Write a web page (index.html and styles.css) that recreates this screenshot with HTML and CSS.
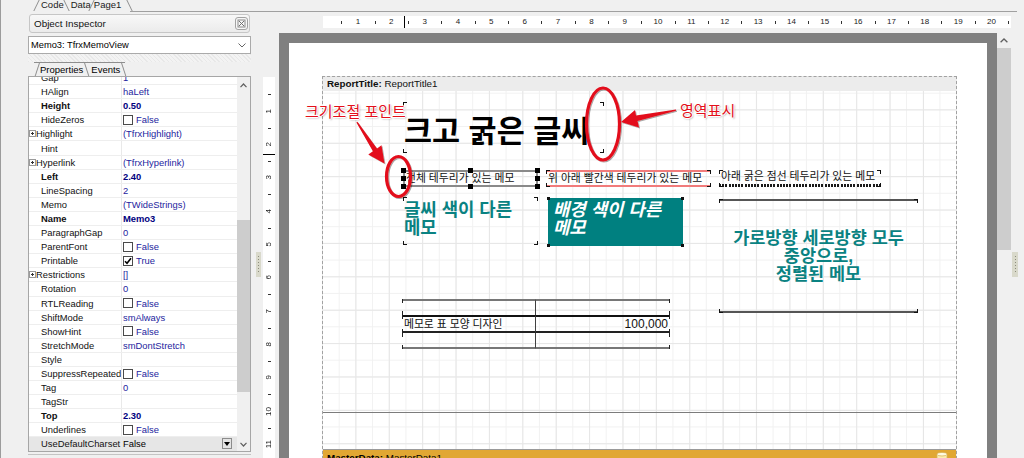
FILE: index.html
```html
<!DOCTYPE html>
<html lang="ko">
<head>
<meta charset="utf-8">
<title>Report Designer</title>
<link rel="stylesheet" href="styles.css">
</head>
<body>
<div class="app">
  <div class="tabstrip">
    <span class="tab t-code">Code</span><span class="tab t-data">Data</span><span class="tab t-page">Page1</span><span class="tabline"></span>
  </div>
  <div class="main">
    <aside class="inspector">
      <div class="oi-head">
        <span class="oi-title">Object Inspector</span>
        <span class="oi-close"><svg width="13" height="13" viewBox="0 0 13 13"><rect x="0.5" y="0.5" width="12" height="12" rx="2.5" fill="#f6f6f6" stroke="#a2a2a2"/><rect x="3" y="3" width="7" height="7" fill="none" stroke="#8a8a8a"/><path d="M4 4l5 5M9 4l-5 5" stroke="#707070"/></svg></span>
      </div>
      <div class="combo"><span>Memo3: TfrxMemoView</span><svg width="8" height="5" viewBox="0 0 8 5"><path d="M0.5 0.5l3.5 3.5 3.5-3.5" fill="none" stroke="#666"/></svg></div>
      <div class="hatch"></div>
      <div class="ptabs"><span class="ptab p-prop">Properties</span><span class="ptab p-ev">Events</span></div>
      <div class="pgrid">
        <div class="rows">
          <div class="rows-in">
            <div class="row"><span class="pn">Gap</span><span class="pv">1</span></div>
            <div class="row"><span class="pn">HAlign</span><span class="pv">haLeft</span></div>
            <div class="row b"><span class="pn">Height</span><span class="pv">0.50</span></div>
            <div class="row"><span class="pn">HideZeros</span><span class="pv"><i class="cb"></i>False</span></div>
            <div class="row x"><span class="pn"><i class="exp"></i>Highlight</span><span class="pv">(TfrxHighlight)</span></div>
            <div class="row"><span class="pn">Hint</span><span class="pv"></span></div>
            <div class="row x"><span class="pn"><i class="exp"></i>Hyperlink</span><span class="pv">(TfrxHyperlink)</span></div>
            <div class="row b"><span class="pn">Left</span><span class="pv">2.40</span></div>
            <div class="row"><span class="pn">LineSpacing</span><span class="pv">2</span></div>
            <div class="row"><span class="pn">Memo</span><span class="pv">(TWideStrings)</span></div>
            <div class="row b"><span class="pn">Name</span><span class="pv">Memo3</span></div>
            <div class="row"><span class="pn">ParagraphGap</span><span class="pv">0</span></div>
            <div class="row"><span class="pn">ParentFont</span><span class="pv"><i class="cb"></i>False</span></div>
            <div class="row"><span class="pn">Printable</span><span class="pv"><i class="cb"><svg width="8" height="8" viewBox="0 0 8 8"><path d="M1 4.2l2 2 4-5" fill="none" stroke="#000" stroke-width="1.6"/></svg></i>True</span></div>
            <div class="row x"><span class="pn"><i class="exp"></i>Restrictions</span><span class="pv">[]</span></div>
            <div class="row"><span class="pn">Rotation</span><span class="pv">0</span></div>
            <div class="row"><span class="pn">RTLReading</span><span class="pv"><i class="cb"></i>False</span></div>
            <div class="row"><span class="pn">ShiftMode</span><span class="pv">smAlways</span></div>
            <div class="row"><span class="pn">ShowHint</span><span class="pv"><i class="cb"></i>False</span></div>
            <div class="row"><span class="pn">StretchMode</span><span class="pv">smDontStretch</span></div>
            <div class="row"><span class="pn">Style</span><span class="pv"></span></div>
            <div class="row"><span class="pn">SuppressRepeated</span><span class="pv"><i class="cb"></i>False</span></div>
            <div class="row"><span class="pn">Tag</span><span class="pv">0</span></div>
            <div class="row"><span class="pn">TagStr</span><span class="pv"></span></div>
            <div class="row b"><span class="pn">Top</span><span class="pv">2.30</span></div>
            <div class="row"><span class="pn">Underlines</span><span class="pv"><i class="cb"></i>False</span></div>
            <div class="row sel"><span class="pn">UseDefaultCharset</span><span class="pv">False<i class="dd"><svg width="6" height="4" viewBox="0 0 6 4"><path d="M0 0h6L3 4z" fill="#000"/></svg></i></span></div>
          </div>
        </div>
        <div class="vs">
          <div class="arr up"><svg width="7" height="5" viewBox="0 0 7 5"><path d="M0.5 4.2L3.5 1l3 3.2" fill="none" stroke="#606060" stroke-width="1.2"/></svg></div>
          <div class="thumb"></div>
          <div class="arr dn"><svg width="7" height="5" viewBox="0 0 7 5"><path d="M0.5 0.8L3.5 4l3-3.2" fill="none" stroke="#606060" stroke-width="1.2"/></svg></div>
        </div>
      </div>
      <div class="oi-foot"></div>
    </aside>
    <div class="split"><span class="grip"></span></div>
    <section class="designer">
      <div class="hr-wrap">
        <div class="hruler">
          <span class="hsp"></span>
          <span class="hc">1</span><span class="hc">2</span><span class="hc">3</span><span class="hc">4</span><span class="hc">5</span><span class="hc">6</span><span class="hc">7</span><span class="hc">8</span><span class="hc">9</span><span class="hc">10</span><span class="hc">11</span><span class="hc">12</span><span class="hc">13</span><span class="hc">14</span><span class="hc">15</span><span class="hc">16</span><span class="hc">17</span><span class="hc">18</span><span class="hc">19</span><span class="hc">20</span><span class="hc"></span>
          <i class="hcur"></i>
        </div>
      </div>
      <div class="vr-wrap">
        <div class="vruler">
          <span class="vsp"></span>
          <span class="vc"><b>1</b></span><span class="vc"><b>2</b></span><span class="vc"><b>3</b></span><span class="vc"><b>4</b></span><span class="vc"><b>5</b></span><span class="vc"><b>6</b></span><span class="vc"><b>7</b></span><span class="vc"><b>8</b></span><span class="vc"><b>9</b></span><span class="vc"><b>10</b></span><span class="vc"><b>11</b></span><span class="vc"><b>12</b></span>
          <i class="vcur"></i>
        </div>
      </div>
      <div class="canvas">
        <div class="page">
          <div class="margin">
            <div class="bandhead"><b>ReportTitle:</b> ReportTitle1</div>
            <div class="band">
              <div class="memo mk m-title">크고 굵은 글씨</div>
              <div class="memo m-full">전체 테두리가 있는 메모<i class="h tl"></i><i class="h tm"></i><i class="h tr"></i><i class="h ml"></i><i class="h mr"></i><i class="h bl"></i><i class="h bm"></i><i class="h br"></i></div>
              <div class="memo mk m-red">위 아래 빨간색 테두리가 있는 메모</div>
              <div class="memo mk m-dot">아래 굵은 점선 테두리가 있는 메모</div>
              <div class="memo mk m-tcol">글씨 색이 다른<br>메모</div>
              <div class="memo sq m-tbg">배경 색이 다른<br>메모</div>
              <div class="memo mk m-ctr"><span>가로방향 세로방향 모두<br>중앙으로,<br>정렬된 메모</span></div>
              <div class="tbl">
                <div class="cell mkl r1 c1"></div><div class="cell mkr r1"></div>
                <div class="cell mkl r2 c1">메모로 표 모양 디자인</div><div class="cell mkr r2 num">100,000</div>
                <div class="cell mkl r3 c1"></div><div class="cell mkr r3"></div>
              </div>
            </div>
            <div class="gap"></div>
            <div class="mdband"><span><b>MasterData:</b> MasterData1</span><svg class="dbi" width="12" height="10" viewBox="0 0 12 10"><path d="M1 2.2v7h10v-7" fill="#fbeeb0" stroke="#d8b45a" stroke-width="0.8"/><ellipse cx="6" cy="2.2" rx="5" ry="1.8" fill="#fffbe2" stroke="#d8b45a" stroke-width="0.8"/></svg></div>
          </div>
        </div>
      </div>
      <div class="dscroll">
        <div class="arr dup"><svg width="8" height="5" viewBox="0 0 8 5"><path d="M0.6 4.3L4 1l3.4 3.3" fill="none" stroke="#606060" stroke-width="1.3"/></svg></div>
        <div class="thumb dthumb"></div>
      </div>
      <div class="rsplit"><span class="grip"></span></div>
    </section>
  </div>

  <svg class="annot" width="1024" height="458" viewBox="0 0 1024 458">
    <defs>
      <filter id="sh" x="-30%" y="-30%" width="160%" height="160%">
        <feDropShadow dx="1" dy="1" stdDeviation="0.7" flood-color="#000" flood-opacity="0.35"/>
      </filter>
    </defs>
    <g filter="url(#sh)">
      <ellipse cx="603" cy="124" rx="16.5" ry="36" fill="none" stroke="#e3101b" stroke-width="3.2"/>
      <ellipse cx="398.5" cy="176.5" rx="12" ry="20" fill="none" stroke="#e3101b" stroke-width="3.2"/>
      <polygon points="621,122 635,110 636,115.5 676,109.4 676,110.8 637.5,121 639,127.5" fill="#e3101b"/>
      <polygon points="384.5,163.5 381.5,145.3 377,148.5 357.4,121.7 356.4,122.4 372.9,151.3 368.3,154.5" fill="#e3101b"/>
    </g>
  </svg>
  <span class="note n1">크기조절 포인트</span>
  <span class="note n2">영역표시</span>
</div>
</body>
</html>
```

FILE: styles.css
```css
* { box-sizing: border-box; }
html, body { margin: 0; padding: 0; background: #f0f0f0; }
body {
  font-family: "Liberation Sans", Arial, sans-serif;
  font-size: 9.4px;
  color: #000;
}
.app {
  position: relative;
  width: 1024px;
  height: 458px;
  overflow: hidden;
  background: #f0f0f0;
  box-shadow: inset 1px 0 0 #9c9c9c;
}

/* ---------- page tabs ---------- */
.tabstrip { display: flex; height: 12px; padding-left: 33px; }
.tab {
  position: relative;
  height: 12px;
  line-height: 10px;
  font-size: 9.5px;
  color: #1a1a1a;
  white-space: nowrap;
}
.tab::before, .tab::after {
  content: "";
  position: absolute;
  top: 0;
  bottom: 1px;
  width: 1px;
  background: #8e8e8e;
}
.tab::before { transform: skewX(-26deg); }
.tab::after { transform: skewX(26deg); }
.t-code { padding: 0 6px 0 8px; }
.t-code::before { left: 2.5px; }
.t-code::after { right: 2.5px; }
.t-data { padding: 0 0 0 1px; }
.t-data::before, .t-data::after { display: none; }
.t-page { padding: 0 9px 0 3px; }
.t-page::before { left: 0; }
.t-page::after { right: 0; }
.tabline { flex: 1; height: 12px; border-bottom: 1px solid #a0a0a0; margin-right: 7px; }

/* ---------- main ---------- */
.main { display: flex; height: 446px; padding-left: 28px; }

/* ---------- object inspector ---------- */
.inspector { width: 223px; flex: none; display: flex; flex-direction: column; }
.oi-head {
  margin: 2px 1px 0 1px;
  height: 19px;
  border: 1px solid #c6c6c6;
  border-radius: 3px;
  background: linear-gradient(#f8f8f8, #ebebeb);
  display: flex;
  align-items: center;
  justify-content: space-between;
  padding: 0 1px 0 4px;
  font-size: 9.9px;
  color: #111;
}
.oi-close { display: flex; }
.combo {
  margin-top: 3px;
  height: 18px;
  border: 1px solid #aaaaaa;
  background: #fff;
  display: flex;
  align-items: center;
  justify-content: space-between;
  padding: 0 4px 0 2px;
  font-size: 9.3px;
}
.hatch {
  height: 8px;
  background: repeating-linear-gradient(45deg, #e8e8e8 0 1px, #f3f3f3 1px 3px);
}
.ptabs { display: flex; height: 14px; padding-left: 6px; }
.ptab {
  position: relative;
  height: 14px;
  line-height: 13px;
  border-top: 1px solid #8e8e8e;
  white-space: nowrap;
  font-size: 9.5px;
}
.ptab::before, .ptab::after {
  content: "";
  position: absolute;
  top: -1px;
  bottom: 0;
  width: 1px;
  background: #8e8e8e;
}
.ptab::before { transform: skewX(-18deg); }
.ptab::after { transform: skewX(18deg); }
.p-prop { padding: 0 4px 0 6px; }
.p-prop::before { left: 3px; }
.p-prop::after { right: 0; }
.p-ev { padding: 0 5px 0 4px; }
.p-ev::before { display: none; }
.p-ev::after { right: 1px; }

.pgrid {
  height: 376px;
  border: 1px solid #a6a6a6;
  background: #fff;
  display: flex;
  overflow: hidden;
}
.rows { width: 208px; flex: none; overflow: hidden; }
.rows-in { margin-top: -6px; }
.row {
  display: flex;
  height: 14.1px;
  border-bottom: 1px solid #eeeeee;
  white-space: nowrap;
}
.pn {
  width: 93px;
  flex: none;
  padding-left: 12px;
  border-right: 1px solid #e9e9e9;
  display: flex;
  align-items: center;
  overflow: hidden;
  color: #111;
}
.x .pn { padding-left: 0; }
.exp {
  width: 7px;
  height: 7px;
  margin-left: 0;
  border: 1px solid #9a9a9a;
  background:
    linear-gradient(#333, #333) center / 3px 1px no-repeat,
    linear-gradient(#333, #333) center / 1px 3px no-repeat,
    #fff;
  flex: none;
}
.pv {
  flex: 1;
  padding-left: 1px;
  display: flex;
  align-items: center;
  color: #24249e;
  overflow: hidden;
}
.b .pn, .b .pv { font-weight: bold; }
.b .pv { color: #00007e; }
.cb {
  width: 10px;
  height: 10px;
  border: 1px solid #4a4a4a;
  background: #fff;
  margin-right: 3px;
  display: flex;
  align-items: center;
  justify-content: center;
  flex: none;
}
.sel { background: #e6e6e6; }
.sel .pv { color: #000; }
.dd {
  margin-left: auto;
  margin-right: 5px;
  width: 10px;
  height: 11px;
  border: 1px solid #8c8c8c;
  background: #e4e4e4;
  display: flex;
  align-items: center;
  justify-content: center;
}
.vs {
  flex: 1;
  background: #f0f0f0;
  display: flex;
  flex-direction: column;
}
.arr { display: flex; align-items: center; justify-content: center; flex: none; }
.vs .up { height: 17px; }
.vs .thumb { margin-top: 126px; height: 172px; background: #cdcdcd; }
.vs .dn { margin-top: auto; height: 14px; }
.oi-foot { margin-top: 2px; border-top: 1px solid #c4c4c4; flex: 1; }

/* ---------- splitters ---------- */
.split { width: 12px; flex: none; }
.grip {
  display: block;
  width: 5px;
  height: 25px;
  margin: 240px 0 0 5px;
  background:
    repeating-linear-gradient(to bottom, #8d8d7c 0 1px, transparent 1px 3px) center / 1px 17px no-repeat,
    #d9d9cb;
}
.rsplit { grid-column: 4; grid-row: 1 / 3; }
.rsplit .grip { margin: 240px 0 0 1px; width: 6px; }

/* ---------- designer ---------- */
.designer {
  flex: 1;
  display: grid;
  grid-template-columns: 16px 718px 14px 1fr;
  grid-template-rows: 21px 1fr;
  min-width: 0;
}
.hr-wrap { grid-column: 2 / 4; grid-row: 1; padding: 4px 0 0 44px; }
.hruler {
  position: relative;
  height: 12px;
  width: 688px;
  background: #fff;
  display: flex;
  overflow: hidden;
  font-size: 8px;
  color: #222;
}
.hsp { flex: 0 0 18.3px; }
.hc {
  flex: 0 0 33.35px;
  display: flex;
  align-items: center;
  justify-content: center;
  line-height: 12px;
  background: linear-gradient(#333, #333) 0 50% / 1px 3px no-repeat;
}
.hcur { position: absolute; left: 81px; top: 0; bottom: 0; width: 1px; background: #000; }

.vr-wrap { grid-column: 1; grid-row: 2; padding-top: 44px; min-height: 0; overflow: hidden; }
.vruler {
  position: relative;
  width: 12px;
  height: 400px;
  background: #fff;
  display: flex;
  flex-direction: column;
  overflow: hidden;
  font-size: 8px;
  color: #222;
}
.vsp { flex: 0 0 17.3px; }
.vc {
  flex: 0 0 33.35px;
  display: flex;
  align-items: center;
  justify-content: center;
  background: linear-gradient(#333, #333) 50% 0 / 3px 1px no-repeat;
}
.vc b { font-weight: normal; writing-mode: vertical-rl; transform: rotate(180deg); line-height: 12px; }
.vcur { position: absolute; top: 77px; left: 0; right: 0; height: 1px; background: #000; }

.canvas {
  grid-column: 2;
  grid-row: 2;
  background: #808080;
  overflow: hidden;
  padding: 10px 10px 0 10px;
  min-height: 0;
}
.page { background: #fff; height: 1000px; padding: 33px 0 0 33px; }
.margin {
  width: 635px;
  border: 1px dashed #a2a2a2;
  border-bottom: 0;
  background-image:
    linear-gradient(to right, #e6e6e6 1px, transparent 1px),
    linear-gradient(to bottom, #e6e6e6 1px, transparent 1px),
    linear-gradient(to right, #f1f1f1 1px, transparent 1px),
    linear-gradient(to bottom, #f1f1f1 1px, transparent 1px);
  background-size: 33.4px 33.4px, 33.4px 33.4px, 16.7px 16.7px, 16.7px 16.7px;
  background-origin: border-box;
}
.bandhead {
  height: 14px;
  line-height: 14px;
  background: #ececec;
  padding-left: 4px;
  font-size: 9.8px;
  color: #111;
}
.band { position: relative; height: 322px; border-bottom: 1px solid #7c7c7c; }
.gap { height: 36px; }
.mdband {
  height: 30px;
  border-top: 1px solid #9a9a9a;
  background: #e1a733;
  display: flex;
  align-items: flex-start;
  justify-content: space-between;
  padding: 2px 8px 0 4px;
  font-size: 9.8px;
  line-height: 12px;
}

/* ---------- memos on the page ---------- */
.memo {
  position: absolute;
  font-family: "Liberation Sans", "Noto Sans CJK KR", sans-serif;
  font-size: 10.8px;
  line-height: 13px;
  white-space: nowrap;
  color: #111;
}
.mk::before, .mkl::before, .mkr::before {
  content: "";
  position: absolute;
  top: var(--ot, 0px);
  bottom: var(--ob, 0px);
  left: 0;
  right: 0;
  pointer-events: none;
  background-repeat: no-repeat;
}
.mk::before {
  background-image:
    linear-gradient(#111, #111), linear-gradient(#111, #111),
    linear-gradient(#111, #111), linear-gradient(#111, #111),
    linear-gradient(#111, #111), linear-gradient(#111, #111),
    linear-gradient(#111, #111), linear-gradient(#111, #111);
  background-position: 0 0, 0 0, 100% 0, 100% 0, 0 100%, 0 100%, 100% 100%, 100% 100%;
  background-size: 4px 1px, 1px 4px, 4px 1px, 1px 4px, 4px 1px, 1px 4px, 4px 1px, 1px 4px;
}
.mkl::before {
  background-image: linear-gradient(#222, #222), linear-gradient(#222, #222);
  background-position: 0 0, 0 100%;
  background-size: 1px 4px, 1px 4px;
}
.mkr::before {
  background-image: linear-gradient(#222, #222), linear-gradient(#222, #222);
  background-position: 100% 0, 100% 100%;
  background-size: 1px 4px, 1px 4px;
}
.sq::before {
  content: "";
  position: absolute;
  inset: -1px;
  pointer-events: none;
  background:
    linear-gradient(#111, #111) 0 0 / 3px 3px,
    linear-gradient(#111, #111) 100% 0 / 3px 3px,
    linear-gradient(#111, #111) 0 100% / 3px 3px,
    linear-gradient(#111, #111) 100% 100% / 3px 3px;
  background-repeat: no-repeat;
}
.m-title {
  left: 80px; top: 11px; width: 201px; height: 51px;
  font-size: 30.5px;
  font-weight: bold;
  line-height: 31px;
  padding: 14px 0 0 1px;
  color: #000;
}
.m-full {
  left: 80px; top: 79px; width: 135px; height: 17px;
  border: 2px solid #8a8a8a;
  padding-left: 1px;
}
.h { position: absolute; width: 5px; height: 5px; background: #000; }
.h.tl { left: -4px; top: -4px; }
.h.tm { left: calc(50% - 2.5px); top: -4px; }
.h.tr { right: -4px; top: -4px; }
.h.ml { left: -4px; top: calc(50% - 2.5px); }
.h.mr { right: -4px; top: calc(50% - 2.5px); }
.h.bl { left: -4px; bottom: -4px; }
.h.bm { left: calc(50% - 2.5px); bottom: -4px; }
.h.br { right: -4px; bottom: -4px; }
.m-red {
  left: 223px; top: 79px; width: 165px; height: 17px;
  border-top: 2px solid #f17b7b;
  border-bottom: 2px solid #f17b7b;
  padding-left: 2px;
  --ot: -2px;
  --ob: -2px;
}
.m-dot {
  left: 396px; top: 79px; width: 162px; height: 17px;
  line-height: 12px;
  padding-left: 2px;
  background: repeating-linear-gradient(90deg, #1a1a1a 0 2px, transparent 2px 3.2px) 0 100% / 100% 3px no-repeat;
}
.m-tcol {
  left: 80px; top: 106px; width: 135px; height: 48px;
  font-size: 17.8px;
  font-weight: bold;
  line-height: 18px;
  padding: 4px 0 0 1px;
  color: #0a8282;
}
.m-tbg {
  left: 225px; top: 107px; width: 135px; height: 48px;
  background: #008080;
  color: #fff;
  font-size: 17.8px;
  font-weight: bold;
  font-style: italic;
  line-height: 18px;
  padding: 3px 0 0 5px;
}
.m-ctr {
  left: 396px; top: 108px; width: 199px; height: 114px;
  border-top: 2px solid #555;
  border-bottom: 2px solid #555;
  --ot: -2px;
  --ob: -2px;
  display: flex;
  align-items: center;
  justify-content: center;
  text-align: center;
  font-size: 17.5px;
  font-weight: bold;
  line-height: 18px;
  color: #0a8282;
}
.tbl {
  position: absolute;
  left: 79px;
  top: 208px;
  width: 268px;
  display: grid;
  grid-template-columns: 134px 134px;
  grid-template-rows: 16px 18px 16px;
  font-family: "Liberation Sans", "Noto Sans CJK KR", sans-serif;
  font-size: 10.8px;
  white-space: nowrap;
}
.cell { position: relative; line-height: 14px; padding: 0 2px; color: #111; }
.cell.c1 { border-right: 1px solid #404040; }
.cell.r1 { border-top: 2px solid #777; --ot: -2px; }
.cell.r2 { border-top: 2px solid #111; border-bottom: 2px solid #222; --ot: -2px; --ob: -2px; }
.cell.r3 { border-bottom: 2px solid #777; --ob: -2px; }
.cell.num { text-align: right; font-size: 12px; }

/* ---------- designer scrollbar ---------- */
.dscroll {
  grid-column: 3;
  grid-row: 2;
  background: #f0f0f0;
  display: flex;
  flex-direction: column;
  min-height: 0;
}
.dup { height: 15px; }
.dthumb { height: 202px; background: #cdcdcd; }

/* ---------- annotations ---------- */
.annot { position: absolute; left: 0; top: 0; pointer-events: none; }
.note {
  position: absolute;
  font-family: "Noto Sans CJK KR", sans-serif;
  font-size: 15px;
  line-height: 15px;
  color: #e3101b;
  white-space: nowrap;
  text-shadow:
    -1px 0 0 #fff, 1px 0 0 #fff, 0 -1px 0 #fff, 0 1px 0 #fff,
    1px 1px 2px rgba(0, 0, 0, 0.45);
}
.n1 { left: 305px; top: 103px; }
.n2 { left: 680px; top: 102px; }
```
